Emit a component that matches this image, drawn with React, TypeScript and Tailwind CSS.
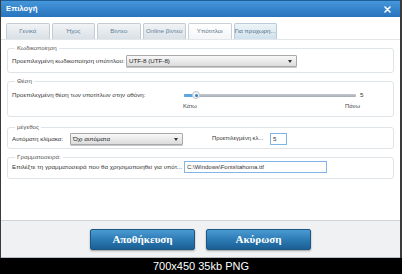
import React from "react";

const font = { fontFamily: '"Liberation Sans", Arial, sans-serif' };

function Tab({ label, state }: { label: string; state: "normal" | "active" | "hover" }) {
  const cls =
    state === "active"
      ? "bg-gradient-to-b from-[#ffffff] to-[#f3f5f7] border-[#c9d0d6] text-[#5a6f85]"
      : state === "hover"
      ? "bg-gradient-to-b from-[#eef4f8] to-[#cfe1ec] border-[#b8ccd9] text-[#4d6b86]"
      : "bg-gradient-to-b from-[#f1f3f5] to-[#d9e1e7] border-[#c3ccd3] text-[#5f7f9c]";
  return (
    <div
      className={`w-[43.5px] h-[16px] flex items-center justify-center border border-b-0 rounded-t-[2px] text-[6.2px] leading-none whitespace-nowrap ${cls}`}
    >
      {label}
    </div>
  );
}

function Select({ value, width }: { value: string; width: string }) {
  return (
    <div
      className={`${width} h-[12px] flex items-center justify-between pl-[2px] pr-[4px] border border-[#a9a9a9] rounded-[1px] bg-gradient-to-b from-[#f8f8f8] to-[#dcdcdc] shadow-[0_1px_0_#c8c8c8] text-[6.2px] text-[#222] leading-none`}
    >
      <span>{value}</span>
      <svg width="4" height="3" viewBox="0 0 4 3">
        <path d="M0 0 L4 0 L2 3 Z" fill="#333" />
      </svg>
    </div>
  );
}

function Group({
  title,
  children,
  className,
}: {
  title: string;
  children: React.ReactNode;
  className?: string;
}) {
  return (
    <fieldset className={`border border-[#dfe4e8] rounded-[3px] px-[4px] ${className ?? ""}`}>
      <legend className="ml-[3px] px-[2px] text-[6.2px] leading-[8px] text-[#555]">{title}</legend>
      {children}
    </fieldset>
  );
}

export default function App() {
  return (
    <div className="w-[402px] h-[274px] bg-black flex flex-col" style={font}>
      <div className="h-[258px] flex flex-col border-l border-r-2 border-[#3a3a3a] bg-white">
        {/* Title bar */}
        <div className="h-[17px] flex items-center justify-between pl-[5px] pr-[9px] bg-gradient-to-b from-[#4596da] to-[#2874bd] border-t border-[#1e5f9a]">
          <span className="text-white font-bold text-[7.8px] leading-none">Επιλογή</span>
          <svg width="7" height="7" viewBox="0 0 7 7">
            <path d="M1 1 L6 6 M6 1 L1 6" stroke="#ffffff" strokeWidth="1.6" strokeLinecap="round" />
          </svg>
        </div>

        {/* Content */}
        <div className="flex-1 flex flex-col pt-[6px]">
          <div className="flex gap-[2px] pl-[5px] border-b border-[#e3e7ea]">
            <Tab label="Γενικά" state="normal" />
            <Tab label="Ήχος" state="normal" />
            <Tab label="Βίντεο" state="normal" />
            <Tab label="Online βίντεο" state="normal" />
            <Tab label="Υπότιτλοι" state="active" />
            <Tab label="Για προχωρη..." state="hover" />
          </div>

          <div className="flex flex-col px-[6px] pt-[4px] text-[#333]">
            <Group title="Κωδικοποίηση" className="pt-[3px] pb-[5px]">
              <div className="flex items-center h-[12px] text-[6.2px] leading-none">
                <span className="w-[114px] whitespace-nowrap">Προεπιλεγμένη κωδικοποίηση υπότιτλου:</span>
                <Select value="UTF-8 (UTF-8)" width="w-[171px]" />
              </div>
            </Group>

            <Group title="Θέση" className="mt-[4px] pt-[4px] pb-[6px]">
              <div className="flex items-center h-[12px] text-[6.2px] leading-none">
                <span className="w-[172px] whitespace-nowrap">Προεπιλεγμένη θέση των υποτίτλων στην οθόνη:</span>
                <div className="relative w-[172px] h-[8px] flex items-center">
                  <div className="w-full h-[3px] rounded-[1px] bg-gradient-to-b from-[#c4cad0] to-[#a4acb4]" />
                  <div className="absolute left-0 top-[2.5px] w-[12px] h-[3px] rounded-[1px] bg-[#5ea6e0]" />
                  <div className="absolute left-[8px] top-0 w-[8px] h-[8px] rounded-full bg-[#f4f6f8] border border-[#b9c2ca] flex items-center justify-center">
                    <div className="w-[3px] h-[3px] rounded-full bg-[#2f7fd0]" />
                  </div>
                </div>
                <span className="ml-[4px]">5</span>
              </div>
              <div className="ml-[171px] w-[177px] mt-[1px] flex justify-between text-[5.8px] leading-[8px] text-[#444]">
                <span>Κάτω</span>
                <span>Πάνω</span>
              </div>
            </Group>

            <Group title="μέγεθος" className="mt-[6px] pt-[2px] pb-[3px]">
              <div className="flex items-center h-[12px] text-[6.2px] leading-none">
                <span className="w-[58px] whitespace-nowrap">Αυτόματη κλίμακα:</span>
                <Select value="Όχι αυτόματα" width="w-[113px]" />
                <span className="ml-[29px] w-[58px] whitespace-nowrap text-[5.8px]">Προεπιλεγμένη κλ...</span>
                <div className="w-[17px] h-[12px] border border-[#7fb5e8] bg-white flex items-center pl-[2px]">5</div>
              </div>
            </Group>

            <Group title="Γραμματοσειρά:" className="mt-[4px] pt-[0px] pb-[5px]">
              <div className="flex items-center h-[12px] text-[6.2px] leading-none">
                <span className="w-[172px] whitespace-nowrap overflow-hidden">Επιλέξτε τη γραμματοσειρά που θα χρησιμοποιηθεί για υπότ...</span>
                <div className="w-[143px] h-[12px] border border-[#7fb5e8] bg-white flex items-center pl-[2px] text-[6px]">
                  C:\Windows\Fonts\tahoma.ttf
                </div>
              </div>
            </Group>
          </div>
        </div>

        {/* Bottom bar */}
        <div className="h-[38px] flex items-center justify-center gap-[11px] bg-[#f0f1f2] border-t border-[#cfd3d6] border-b border-b-[#b8bcc0]">
          {["Αποθήκευση", "Ακύρωση"].map((t) => (
            <div
              key={t}
              className="w-[105px] h-[21px] flex items-center justify-center rounded-[2px] border border-[#1d5583] bg-gradient-to-b from-[#4a9bd3] via-[#2d7bb5] to-[#1b5f94] shadow-[0_1px_2px_rgba(0,0,0,0.35)] text-white font-bold text-[11px] leading-none"
              style={{ fontFamily: '"Liberation Serif", "Times New Roman", serif' }}
            >
              {t}
            </div>
          ))}
        </div>
      </div>
      <div className="h-[16px] flex items-center justify-center text-white text-[11px] leading-none">
        700x450 35kb PNG
      </div>
    </div>
  );
}
